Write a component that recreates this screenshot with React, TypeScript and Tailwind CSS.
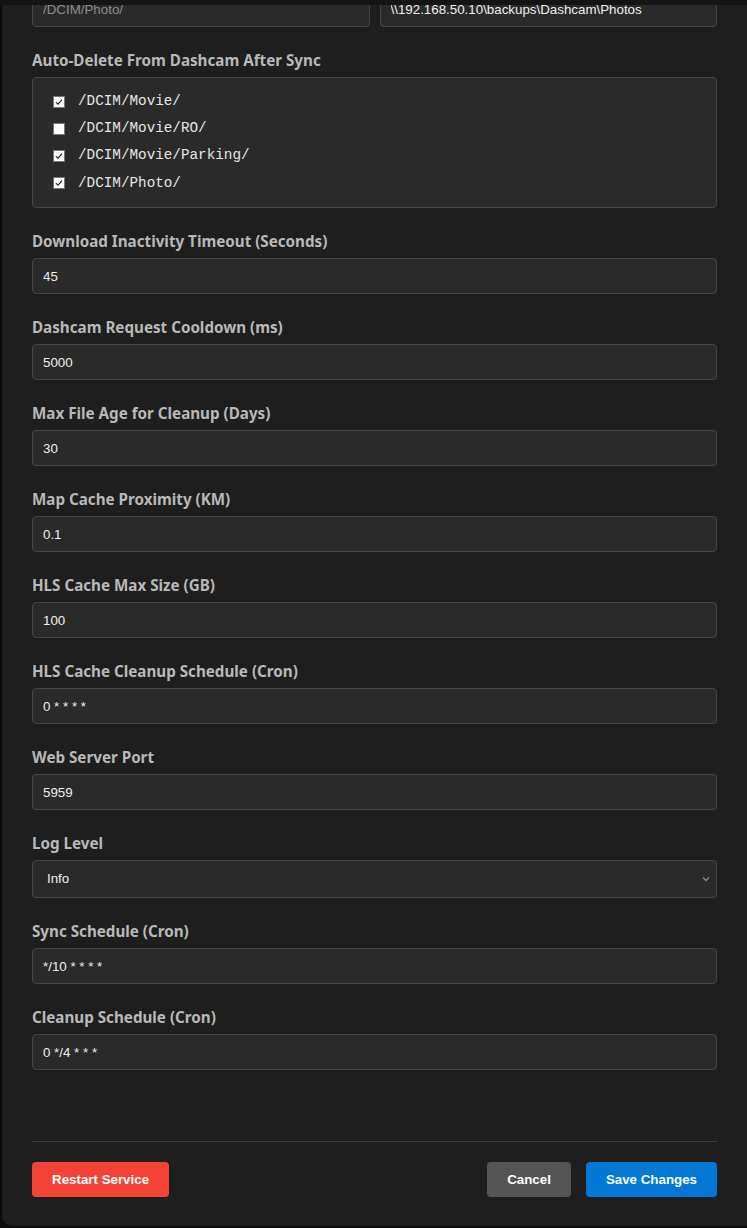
import { ReactNode } from 'react';

const labelCls =
  "block h-[20px] leading-[20px] mb-[7px] text-[15.2px] font-bold text-[#b8b8b8] font-['Noto_Sans',sans-serif]";
const inputCls =
  "block w-full h-[36px] px-[10px] rounded-[4px] border border-[#464646] bg-[#2a2a2a] text-[13.33px] text-[#eeeeee] font-['Liberation_Sans',Arial,sans-serif] outline-none placeholder:text-[#8c8c8c]";

function Field({ label, children }: { label: string; children: ReactNode }) {
  return (
    <div className="mb-[23px]">
      <label className={labelCls}>{label}</label>
      {children}
    </div>
  );
}

function Check({ checked }: { checked: boolean }) {
  return (
    <span className="w-[12px] h-[12px] bg-white border border-[#767676] flex items-center justify-center shrink-0">
      {checked && (
        <svg viewBox="0 0 12 12" className="w-[10px] h-[10px]" fill="none" stroke="#222" strokeWidth={1.4}>
          <path d="M2.2 6.2 L4.8 8.6 L9.6 3.2" />
        </svg>
      )}
    </span>
  );
}

const folders = [
  { path: '/DCIM/Movie/', checked: true },
  { path: '/DCIM/Movie/RO/', checked: false },
  { path: '/DCIM/Movie/Parking/', checked: true },
  { path: '/DCIM/Photo/', checked: true },
];

const textFields = [
  { label: 'Download Inactivity Timeout (Seconds)', value: '45' },
  { label: 'Dashcam Request Cooldown (ms)', value: '5000' },
  { label: 'Max File Age for Cleanup (Days)', value: '30' },
  { label: 'Map Cache Proximity (KM)', value: '0.1' },
  { label: 'HLS Cache Max Size (GB)', value: '100' },
  { label: 'HLS Cache Cleanup Schedule (Cron)', value: '0 * * * *' },
  { label: 'Web Server Port', value: '5959' },
];

export default function App() {
  return (
    <div className="relative h-[1228px] overflow-hidden bg-[#0c0c0c]">
      {/* top shadow band from the overlay */}
      <div className="absolute top-0 left-0 right-0 h-[5px] bg-[#141414] z-10" aria-hidden="true"></div>

      <div className="ml-[2px] bg-[#1e1e1e] rounded-bl-[10px] px-[30px] pb-[29px]">
        {/* Photo folder row (scrolled) */}
        <div className="grid grid-cols-2 gap-[10px] -mt-[9px] mb-[23px]">
          <input className={inputCls} placeholder="/DCIM/Photo/" readOnly />
          <input className={inputCls} defaultValue={'\\\\192.168.50.10\\backups\\Dashcam\\Photos'} readOnly />
        </div>

        <Field label="Auto-Delete From Dashcam After Sync">
          <div className="rounded-[4px] border border-[#464646] bg-[#2a2a2a] py-[10px] pl-[20px]">
            {folders.map((f) => (
              <div key={f.path} className="h-[27.25px] flex items-center gap-[13px]">
                <Check checked={f.checked} />
                <span className="text-[14.3px] text-[#e6e6e6] font-['Liberation_Mono',monospace]">{f.path}</span>
              </div>
            ))}
          </div>
        </Field>

        {textFields.map((f) => (
          <Field key={f.label} label={f.label}>
            <input className={inputCls} defaultValue={f.value} readOnly />
          </Field>
        ))}

        <Field label="Log Level">
          <div className="relative">
            <select
              className="block w-full h-[38px] pl-[14px] pr-[30px] appearance-none rounded-[4px] border border-[#464646] bg-[#2a2a2a] text-[13.33px] text-[#eeeeee] font-['Liberation_Sans',Arial,sans-serif] outline-none"
              defaultValue="Info"
            >
              <option>Debug</option>
              <option>Info</option>
              <option>Warning</option>
              <option>Error</option>
            </select>
            <svg
              className="absolute right-[6px] top-1/2 -translate-y-1/2 w-[10px] h-[10px] pointer-events-none"
              viewBox="0 0 10 10"
              fill="none"
              stroke="#8a8a8a"
              strokeWidth={1.3}
            >
              <path d="M2 3.5 L5 6.5 L8 3.5" />
            </svg>
          </div>
        </Field>

        <Field label="Sync Schedule (Cron)">
          <input className={inputCls} defaultValue="*/10 * * * *" readOnly />
        </Field>

        <Field label="Cleanup Schedule (Cron)">
          <input className={inputCls} defaultValue="0 */4 * * *" readOnly />
        </Field>

        {/* Footer */}
        <div className="mt-[71px] border-t border-[#3c3c3c] pt-[20px] flex items-center justify-between font-['Liberation_Sans',Arial,sans-serif]">
          <button className="h-[35px] px-[20px] rounded-[4px] bg-[#f44336] text-white text-[13.33px] font-bold">
            Restart Service
          </button>
          <div className="flex gap-[15px]">
            <button className="h-[35px] px-[20px] rounded-[4px] bg-[#555555] text-white text-[13.33px] font-bold">
              Cancel
            </button>
            <button className="h-[35px] px-[20px] rounded-[4px] bg-[#0078d4] text-white text-[13.33px] font-bold">
              Save Changes
            </button>
          </div>
        </div>
      </div>
    </div>
  );
}
